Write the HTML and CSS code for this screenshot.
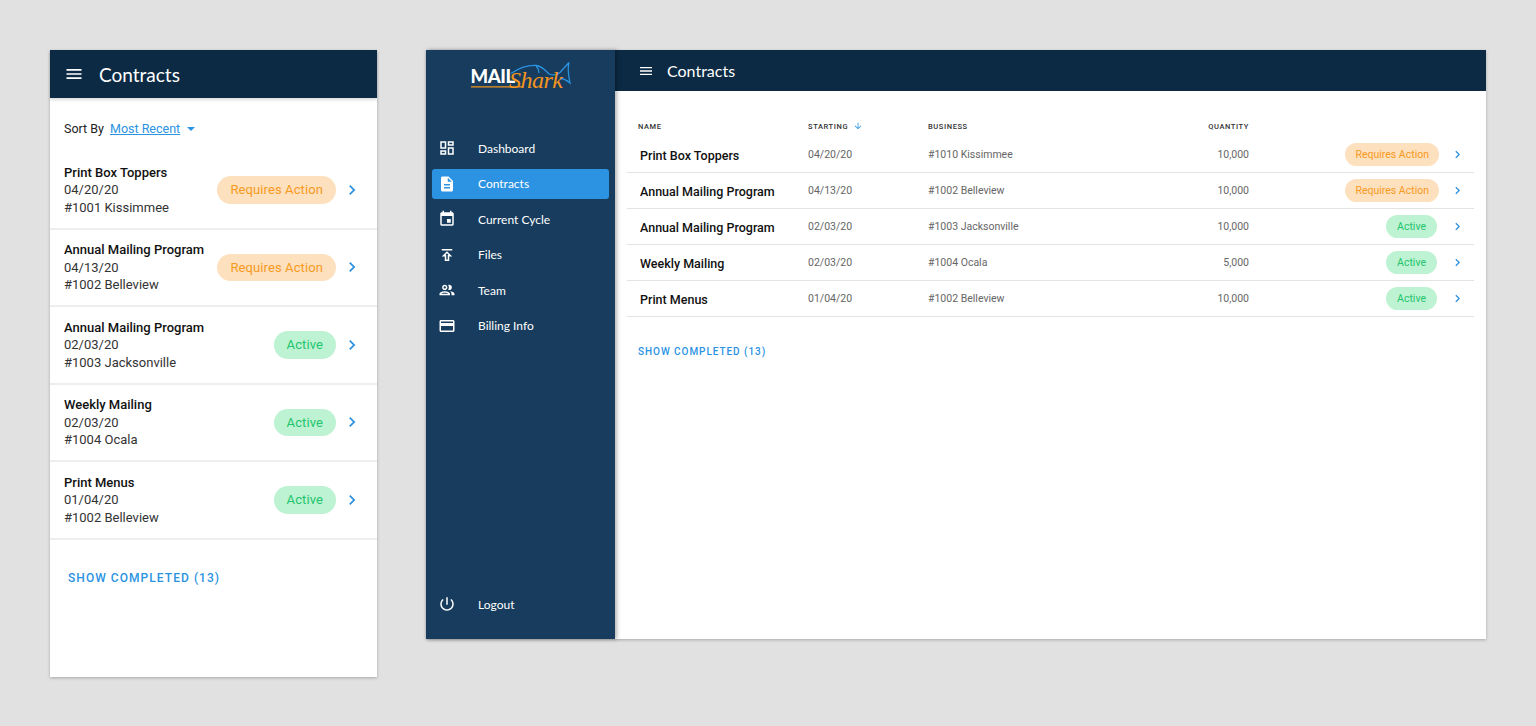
FILE: index.html
```html
<!DOCTYPE html>
<html lang="en">
<head>
<meta charset="utf-8">
<title>Contracts</title>
<link rel="stylesheet" href="styles.css">
</head>
<body>
<svg class="defs" width="0" height="0" aria-hidden="true">
  <symbol id="i-menu" viewBox="0 0 24 24"><path d="M3 18h18v-2H3v2zm0-5h18v-2H3v2zm0-7v2h18V6H3z"/></symbol>
  <symbol id="i-chev" viewBox="0 0 24 24"><path d="M10 6L8.59 7.41 13.17 12l-4.58 4.59L10 18l6-6z"/></symbol>
  <symbol id="i-down" viewBox="0 0 24 24"><path d="M20 12l-1.41-1.41L13 16.17V4h-2v12.17l-5.58-5.59L4 12l8 8 8-8z"/></symbol>
  <symbol id="i-dash" viewBox="0 0 24 24"><path d="M19 5v2h-4V5h4M9 5v6H5V5h4m10 8v6h-4v-6h4M9 17v2H5v-2h4M21 3h-8v6h8V3zM11 3H3v10h8V3zm10 8h-8v10h8V11zm-10 4H3v6h8v-6z"/></symbol>
  <symbol id="i-doc" viewBox="0 0 24 24"><path d="M14 2H6c-1.1 0-1.99.9-1.99 2L4 20c0 1.1.89 2 1.99 2H18c1.1 0 2-.9 2-2V8l-6-6zm2 16H8v-2h8v2zm0-4H8v-2h8v2zm-3-5V3.5L18.5 9H13z"/></symbol>
  <symbol id="i-event" viewBox="0 0 24 24"><path d="M17 12h-5v5h5v-5zM16 1v2H8V1H6v2H5c-1.11 0-1.99.9-1.99 2L3 19c0 1.1.89 2 2 2h14c1.1 0 2-.9 2-2V5c0-1.1-.9-2-2-2h-1V1h-2zm3 18H5V8h14v11z"/></symbol>
  <symbol id="i-pub" viewBox="0 0 24 24"><path d="M5 4h14v2H5zm0 10h4v6h6v-6h4l-7-7-7 7zm8-2v6h-2v-6H9.83L12 9.83 14.17 12H13z"/></symbol>
  <symbol id="i-team" viewBox="0 0 24 24"><path d="M9 13.75c-2.34 0-7 1.17-7 3.5V19h14v-1.75c0-2.33-4.66-3.5-7-3.5zM4.34 17c.84-.58 2.87-1.25 4.66-1.25s3.82.67 4.66 1.25H4.34zM9 12c1.93 0 3.5-1.57 3.5-3.5S10.93 5 9 5 5.5 6.57 5.5 8.5 7.07 12 9 12zm0-5c.83 0 1.5.67 1.5 1.5S9.83 10 9 10s-1.5-.67-1.5-1.5S8.17 7 9 7zm7.04 6.81c1.16.84 1.96 1.96 1.96 3.44V19h4v-1.75c0-2.02-3.5-3.17-5.96-3.44zM15 12c1.93 0 3.5-1.57 3.5-3.5S16.93 5 15 5c-.54 0-1.04.13-1.5.35.63.89 1 1.98 1 3.15s-.37 2.26-1 3.15c.46.22.96.35 1.5.35z"/></symbol>
  <symbol id="i-card" viewBox="0 0 24 24"><path d="M20 4H4c-1.11 0-1.99.89-1.99 2L2 18c0 1.11.89 2 2 2h16c1.11 0 2-.89 2-2V6c0-1.11-.89-2-2-2zm0 14H4v-6h16v6zm0-10H4V6h16v2z"/></symbol>
  <symbol id="i-power" viewBox="0 0 24 24"><path d="M13 3h-2v10h2V3zm4.83 2.17l-1.42 1.42C17.99 7.86 19 9.81 19 12c0 3.87-3.13 7-7 7s-7-3.13-7-7c0-2.19 1.01-4.14 2.58-5.42L6.17 5.17C4.23 6.82 3 9.26 3 12c0 4.97 4.03 9 9 9s9-4.03 9-9c0-2.74-1.23-5.18-3.17-6.83z"/></symbol>
</svg>

<section class="phone">
  <header class="phone-bar">
    <svg class="phone-menu"><use href="#i-menu"/></svg>
    <h1 class="phone-title">Contracts</h1>
  </header>
  <div class="sort">
    <span>Sort By</span>
    <a class="sort-link">Most Recent</a>
    <span class="caret"></span>
  </div>
  <ul class="cards">
    <li class="card">
      <div class="card-text"><strong>Print Box Toppers</strong><span>04/20/20</span><span>#1001 Kissimmee</span></div>
      <span class="pill pill-warn">Requires Action</span>
      <svg class="card-chev"><use href="#i-chev"/></svg>
    </li>
    <li class="card">
      <div class="card-text"><strong>Annual Mailing Program</strong><span>04/13/20</span><span>#1002 Belleview</span></div>
      <span class="pill pill-warn">Requires Action</span>
      <svg class="card-chev"><use href="#i-chev"/></svg>
    </li>
    <li class="card">
      <div class="card-text"><strong>Annual Mailing Program</strong><span>02/03/20</span><span>#1003 Jacksonville</span></div>
      <span class="pill pill-ok">Active</span>
      <svg class="card-chev"><use href="#i-chev"/></svg>
    </li>
    <li class="card">
      <div class="card-text"><strong>Weekly Mailing</strong><span>02/03/20</span><span>#1004 Ocala</span></div>
      <span class="pill pill-ok">Active</span>
      <svg class="card-chev"><use href="#i-chev"/></svg>
    </li>
    <li class="card">
      <div class="card-text"><strong>Print Menus</strong><span>01/04/20</span><span>#1002 Belleview</span></div>
      <span class="pill pill-ok">Active</span>
      <svg class="card-chev"><use href="#i-chev"/></svg>
    </li>
  </ul>
  <a class="phone-more">SHOW COMPLETED (13)</a>
</section>

<section class="desk">
  <aside class="side">
    <div class="logo-wrap">
      <svg class="logo" viewBox="0 0 110 36" width="110" height="36">
        <path class="logo-fin" d="M46 15.5 C54 10 62 7 71 7.5 C75 8 78 10 81 13 L84 16 C88 17.5 92 17 95 14.5 C98 11 101 8 104 4.5 C102.500 10 103.500 18 105 25 C102 22.500 99 20.500 95 20.500 M71 7.500 C73 10 74 12 74 15"/>
        <text class="logo-mail" x="5.500" y="24.500">MAIL</text>
        <path class="logo-line" d="M6 28.800 H58"/>
        <text class="logo-shark" x="44" y="30">Shark</text>
      </svg>
    </div>
    <nav class="nav">
      <a class="nav-item"><svg class="nav-icon"><use href="#i-dash"/></svg>Dashboard</a>
      <a class="nav-item is-active"><svg class="nav-icon"><use href="#i-doc"/></svg>Contracts</a>
      <a class="nav-item"><svg class="nav-icon"><use href="#i-event"/></svg>Current Cycle</a>
      <a class="nav-item"><svg class="nav-icon"><use href="#i-pub"/></svg>Files</a>
      <a class="nav-item"><svg class="nav-icon"><use href="#i-team"/></svg>Team</a>
      <a class="nav-item"><svg class="nav-icon"><use href="#i-card"/></svg>Billing Info</a>
    </nav>
    <a class="nav-item logout"><svg class="nav-icon"><use href="#i-power"/></svg>Logout</a>
  </aside>
  <div class="main">
    <header class="main-bar">
      <svg class="main-menu"><use href="#i-menu"/></svg>
      <h1 class="main-title">Contracts</h1>
    </header>
    <div class="content">
      <div class="row row-head">
        <span>NAME</span>
        <span class="sorted">STARTING<svg class="sort-arrow"><use href="#i-down"/></svg></span>
        <span>BUSINESS</span>
        <span class="num">QUANTITY</span>
      </div>
      <div class="row">
        <strong class="name">Print Box Toppers</strong><span>04/20/20</span><span>#1010 Kissimmee</span><span class="num">10,000</span>
        <span class="status"><span class="pill pill-sm pill-warn">Requires Action</span></span>
        <svg class="row-chev"><use href="#i-chev"/></svg>
      </div>
      <div class="row">
        <strong class="name">Annual Mailing Program</strong><span>04/13/20</span><span>#1002 Belleview</span><span class="num">10,000</span>
        <span class="status"><span class="pill pill-sm pill-warn">Requires Action</span></span>
        <svg class="row-chev"><use href="#i-chev"/></svg>
      </div>
      <div class="row">
        <strong class="name">Annual Mailing Program</strong><span>02/03/20</span><span>#1003 Jacksonville</span><span class="num">10,000</span>
        <span class="status"><span class="pill pill-sm pill-ok">Active</span></span>
        <svg class="row-chev"><use href="#i-chev"/></svg>
      </div>
      <div class="row">
        <strong class="name">Weekly Mailing</strong><span>02/03/20</span><span>#1004 Ocala</span><span class="num">5,000</span>
        <span class="status"><span class="pill pill-sm pill-ok">Active</span></span>
        <svg class="row-chev"><use href="#i-chev"/></svg>
      </div>
      <div class="row">
        <strong class="name">Print Menus</strong><span>01/04/20</span><span>#1002 Belleview</span><span class="num">10,000</span>
        <span class="status"><span class="pill pill-sm pill-ok">Active</span></span>
        <svg class="row-chev"><use href="#i-chev"/></svg>
      </div>
      <a class="desk-more">SHOW COMPLETED (13)</a>
    </div>
  </div>
</section>
</body>
</html>
```
FILE: styles.css
```css
* { box-sizing: border-box; }
html, body { height: 100%; }
body {
  margin: 0;
  padding: 50px 50px 0;
  display: flex;
  align-items: flex-start;
  gap: 49px;
  background: #e1e1e1;
  font-family: Roboto, "Liberation Sans", sans-serif;
  color: #111;
  overflow: hidden;
}
.defs { position: absolute; }
svg { display: block; fill: currentColor; }
h1 { margin: 0; font-family: Lato, "Liberation Sans", sans-serif; font-weight: 400; }
ul { margin: 0; padding: 0; list-style: none; }

/* phone */
.phone {
  width: 327px;
  height: 627px;
  background: #fff;
  box-shadow: 0 1px 3px rgba(0,0,0,.25);
  display: flex;
  flex-direction: column;
}
.phone-bar {
  height: 48px;
  background: #0c2a44;
  color: #fff;
  display: flex;
  align-items: center;
  padding-left: 14px;
  gap: 15px;
  box-shadow: 0 2px 3px rgba(0,0,0,.14);
}
.phone-menu { width: 20px; height: 20px; }
.phone-title { font-size: 19px; }
.sort {
  height: 54px;
  padding: 7px 0 0 14px;
  display: flex;
  align-items: center;
  font-size: 12.5px;
  color: #222;
}
.sort-link { color: #2a93e2; text-decoration: underline; margin-left: 6px; }
.caret {
  margin-left: 7px;
  border-left: 4.5px solid transparent;
  border-right: 4.5px solid transparent;
  border-top: 4.5px solid #2a93e2;
}
.cards { display: flex; flex-direction: column; }
.card {
  height: 77.5px;
  padding: 0 15px 0 14px;
  border-bottom: 2px solid #eeeeee;
  display: flex;
  align-items: center;
}
.card-text {
  flex: 1;
  display: flex;
  flex-direction: column;
  font-size: 13px;
  line-height: 17.5px;
  color: #333;
}
.card-text strong { font-weight: 500; color: #111; }
.pill {
  height: 27.500px;
  padding: 0 13px;
  border-radius: 14px;
  display: inline-flex;
  align-items: center;
  font-size: 13px;
  letter-spacing: .1px;
}
.pill-warn { background: #fde0bd; color: #f79a1e; }
.pill-ok { background: #bdf2d2; color: #22c56d; }
.card-chev { width: 20px; height: 20px; margin-left: 6px; color: #2a8fdf; }
.phone-more {
  margin: 31px 0 0 18px;
  font-size: 12px;
  font-weight: 500;
  letter-spacing: 1.05px;
  color: #2a93e2;
}

/* desktop */
.desk {
  width: 1060px;
  height: 589px;
  display: flex;
  background: #fff;
  box-shadow: 0 1px 3px rgba(0,0,0,.25);
}
.side {
  width: 189px;
  flex: none;
  background: #173c5d;
  color: #fff;
  display: flex;
  flex-direction: column;
  padding-bottom: 20px;
  font-family: Lato, "Liberation Sans", sans-serif;
  font-size: 12px;
  box-shadow: 2px 0 4px rgba(0,0,0,.3);
  position: relative;
}
.logo-wrap { height: 83px; padding: 8px 0 0 39px; }
.logo-fin { fill: none; stroke: #2a93e2; stroke-width: 1.300; }
.logo-mail { font-family: Lato, sans-serif; font-weight: 900; font-size: 18.500px; letter-spacing: -.4px; fill: #fff; }
.logo-line { fill: none; stroke: #f4931e; stroke-width: 1.300; }
.logo-shark { font-family: "Liberation Serif", serif; font-style: italic; font-size: 24px; letter-spacing: -.5px; fill: #f4931e; }
.nav { display: flex; flex-direction: column; gap: 5.500px; }
.nav-item {
  height: 30px;
  margin: 0 6px;
  padding-left: 6px;
  border-radius: 3px;
  display: flex;
  align-items: center;
  gap: 22px;
}
.nav-item.is-active { background: #2c93e2; }
.nav-icon { width: 18px; height: 18px; flex: none; }
.logout { margin-top: auto; }
.main { flex: 1; display: flex; flex-direction: column; min-width: 0; }
.main-bar {
  height: 41px;
  background: #0c2a44;
  color: #fff;
  display: flex;
  align-items: center;
  padding-left: 23px;
  gap: 13px;
}
.main-menu { width: 16px; height: 16px; }
.main-title { font-size: 16px; }
.content { padding: 24px 12px 0; display: flex; flex-direction: column; }
.row {
  height: 36px;
  padding-left: 13px;
  display: grid;
  grid-template-columns: 168px 120px 221px 100px 1fr 35px;
  align-items: center;
  font-size: 10.500px;
  color: #666;
  border-bottom: 1px solid #e3e3e3;
}
.row-head {
  height: 22px;
  padding-left: 11px;
  grid-template-columns: 170px 120px 221px 100px;
  font-size: 7.500px;
  font-weight: 500;
  letter-spacing: .6px;
  color: #333;
  border-bottom: 0;
}
.name { font-size: 12.500px; font-weight: 500; color: #111; padding-top: 1px; }
.num { text-align: right; }
.sorted { display: flex; align-items: center; gap: 5px; }
.sort-arrow { width: 10px; height: 10px; color: #2a93e2; }
.status { display: flex; justify-content: flex-end; }
.pill-sm { height: 23.500px; padding: 0 10px; font-size: 10.500px; letter-spacing: 0; }
.pill-sm.pill-ok { margin-right: 2px; padding: 0 11px; }
.row-chev { width: 15px; height: 15px; margin-left: 11px; color: #2a8fdf; }
.desk-more {
  margin: 29px 0 0 11px;
  font-size: 10px;
  font-weight: 500;
  letter-spacing: .95px;
  color: #2a93e2;
}
```
